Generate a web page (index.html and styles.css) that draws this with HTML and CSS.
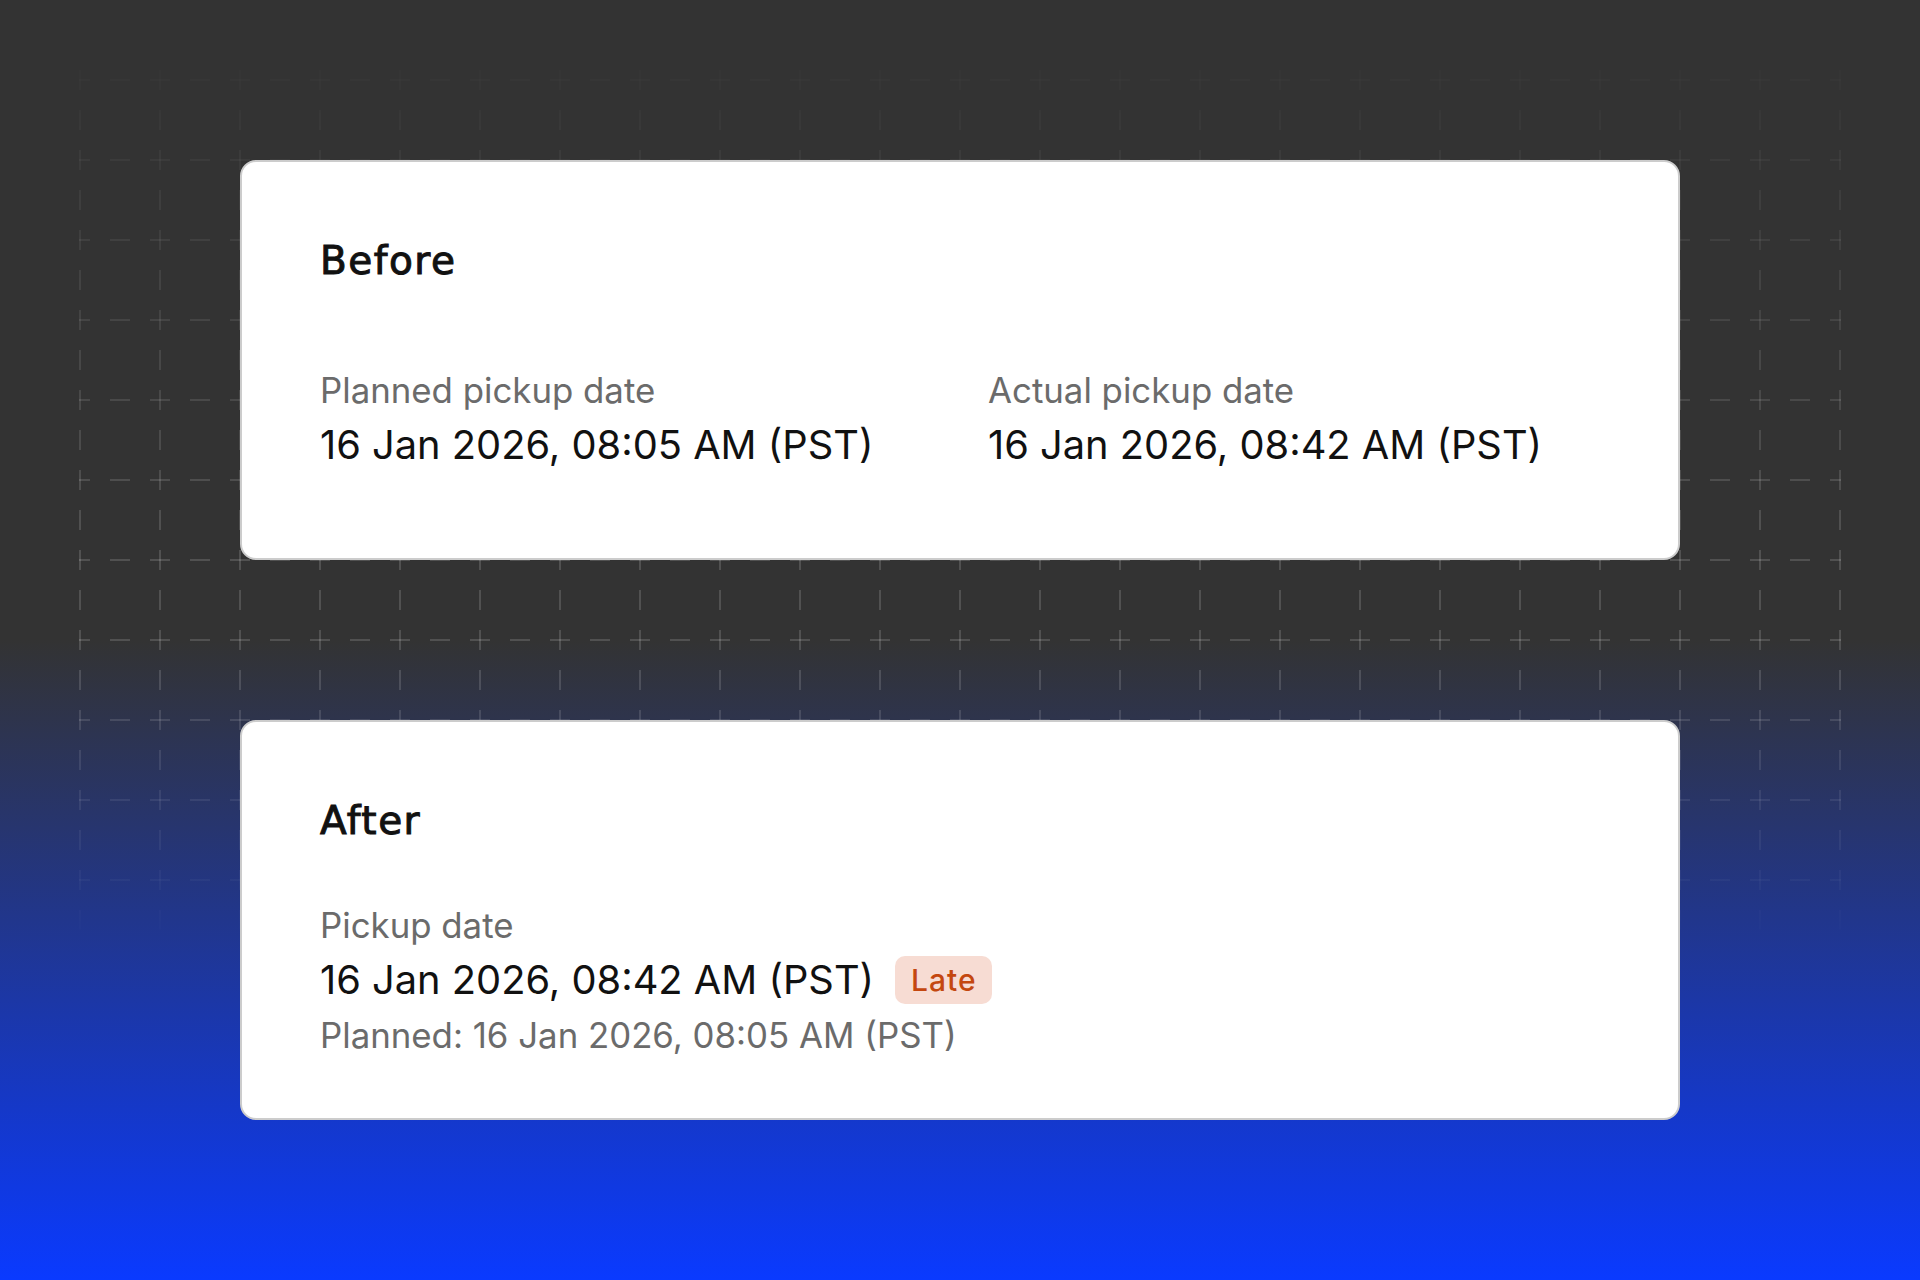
FILE: index.html
```html
<!DOCTYPE html>
<html lang="en">
<head>
    <meta charset="UTF-8">
    <meta name="viewport" content="width=device-width, initial-scale=1.0">
    <title>Pickup date before and after</title>
    <link rel="stylesheet" href="styles.css">
</head>
<body>

    <svg class="grid-lines" width="1920" height="1280" aria-hidden="true">
        <defs>
            <pattern id="tile" width="80" height="80" patternUnits="userSpaceOnUse">
                <path d="M0 0H10M30 0H50M70 0H80M0 80H10M30 80H50M70 80H80" />
                <path d="M0 0V10M0 30V50M0 70V80M80 0V10M80 30V50M80 70V80" />
            </pattern>
        </defs>
        <rect x="79" y="0" width="1762" height="1280" fill="url(#tile)" />
    </svg>

    <main class="page">
        <section class="card">
            <h2>Before</h2>
            <div class="fields fields-two">
                <div>
                    <p class="label">Planned pickup date</p>
                    <p class="value">16 Jan 2026, 08:05 AM (PST)</p>
                </div>
                <div>
                    <p class="label">Actual pickup date</p>
                    <p class="value">16 Jan 2026, 08:42 AM (PST)</p>
                </div>
            </div>
        </section>

        <section class="card">
            <h2>After</h2>
            <div class="fields fields-one">
                <p class="label">Pickup date</p>
                <p class="value value-row">16 Jan 2026, 08:42 AM (PST) <span class="badge">Late</span></p>
                <p class="label note">Planned: 16 Jan 2026, 08:05 AM (PST)</p>
            </div>
        </section>
    </main>

</body>
</html>
```

FILE: styles.css
```css
body {
    margin: 0;
    height: 1280px;
    overflow: hidden;
    font-family: 'Inter', sans-serif;
    background: linear-gradient(180deg, #333333 50%, #0a3aff 100%);
    color: #111111;
}
.grid-lines {
    position: absolute;
    top: 0;
    left: 0;
    -webkit-mask-image: linear-gradient(180deg, transparent 3%, rgba(0, 0, 0, 0.35) 15%, #000 42%, #000 52%, transparent 74%);
    mask-image: linear-gradient(180deg, transparent 3%, rgba(0, 0, 0, 0.35) 15%, #000 42%, #000 52%, transparent 74%);
}
.grid-lines path {
    stroke: rgba(255, 255, 255, 0.15);
    stroke-width: 2;
    fill: none;
}
.page {
    position: relative;
    display: flex;
    flex-direction: column;
    align-items: center;
    gap: 160px;
    padding-top: 160px;
}
.card {
    box-sizing: border-box;
    width: 1440px;
    height: 400px;
    padding: 80px 78px;
    background: white;
    border: 2px solid #cccccc;
    border-radius: 16px;
}
h2 {
    margin: -1px 0 0;
    font-family: 'DejaVu Sans', sans-serif;
    font-size: 39px;
    font-weight: normal;
    line-height: 40px;
    letter-spacing: 1.5px;
    -webkit-text-stroke: 1px #111111;
}
p {
    margin: 0;
}
.fields-two {
    display: grid;
    grid-template-columns: 612px 612px;
    gap: 56px;
    margin-top: 82px;
}
.fields-one {
    margin-top: 57px;
}
.label {
    font-size: 34.8px;
    line-height: 55px;
    color: #6b6b6b;
}
.note {
    margin-top: 1px;
}
.value {
    font-size: 39.8px;
    line-height: 54px;
    color: #111111;
}
.value-row {
    display: flex;
    align-items: center;
    gap: 21px;
}
.badge {
    padding: 0 15px 0 16px;
    height: 48px;
    line-height: 48px;
    font-size: 30px;
    font-weight: 500;
    letter-spacing: 1px;
    color: #c4470f;
    background: #f7dcd3;
    border-radius: 10px;
}
```
